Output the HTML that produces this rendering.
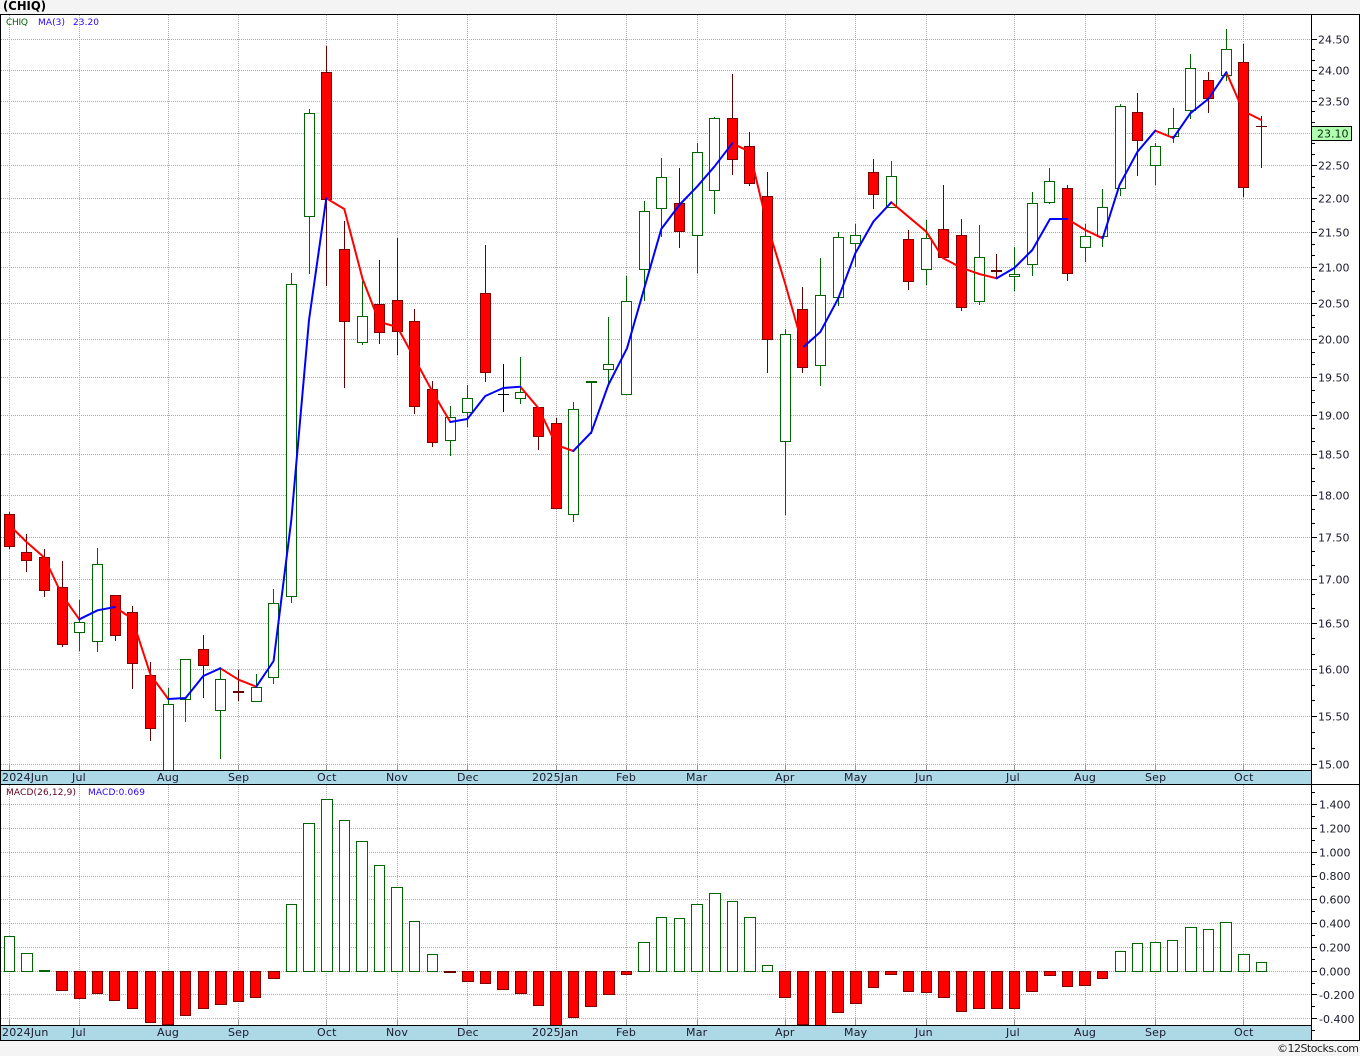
<!DOCTYPE html>
<html><head><meta charset="utf-8"><title>CHIQ</title>
<style>
html,body{margin:0;padding:0;background:#f4f4f4}
svg{display:block}
text{font-family:"DejaVu Sans","Liberation Sans",sans-serif;font-size:11px;fill:#1a1a2e}
.d text{letter-spacing:.2px}
.s{font-size:9px}
</style></head><body>
<svg xmlns="http://www.w3.org/2000/svg" width="1360" height="1056" viewBox="0 0 1360 1056">
<rect width="1360" height="1056" fill="#f4f4f4"/>
<rect x="0" y="14" width="1360" height="1026" fill="#fff"/>
<text x="3" y="10" style="font-weight:bold;font-size:12px;fill:#000" textLength="43" lengthAdjust="spacingAndGlyphs">(CHIQ)</text>

<!-- grid -->
<g fill="none" stroke="#aaa" stroke-width="1" stroke-dasharray="1 1" shape-rendering="crispEdges">
<path d="M1 39.5H1311M1 70.5H1311M1 101.5H1311M1 133.5H1311M1 165.5H1311M1 198.5H1311M1 232.5H1311M1 267.5H1311M1 303.5H1311M1 339.5H1311M1 377.5H1311M1 415.5H1311M1 454.5H1311M1 495.5H1311M1 537.5H1311M1 579.5H1311M1 623.5H1311M1 669.5H1311M1 716.5H1311M1 764.5H1311"/>
<path d="M1 804.5H1311M1 828.5H1311M1 852.5H1311M1 876.5H1311M1 899.5H1311M1 923.5H1311M1 947.5H1311M1 971.5H1311M1 994.5H1311M1 1018.5H1311"/>
<path d="M9.5 15V770M79.5 15V770M168.5 15V770M238.5 15V770M326.5 15V770M397.5 15V770M467.5 15V770M556.5 15V770M626.5 15V770M697.5 15V770M785.5 15V770M855.5 15V770M926.5 15V770M1014.5 15V770M1085.5 15V770M1155.5 15V770M1243.5 15V770"/>
<path d="M9.5 785V1025M79.5 785V1025M168.5 785V1025M238.5 785V1025M326.5 785V1025M397.5 785V1025M467.5 785V1025M556.5 785V1025M626.5 785V1025M697.5 785V1025M785.5 785V1025M855.5 785V1025M926.5 785V1025M1014.5 785V1025M1085.5 785V1025M1155.5 785V1025M1243.5 785V1025"/>
</g>
<path fill="none" stroke="#999" shape-rendering="crispEdges" d="M9.5 765V770M79.5 765V770M168.5 765V770M238.5 765V770M326.5 765V770M397.5 765V770M467.5 765V770M556.5 765V770M626.5 765V770M697.5 765V770M785.5 765V770M855.5 765V770M926.5 765V770M1014.5 765V770M1085.5 765V770M1155.5 765V770M1243.5 765V770M9.5 1020V1025M79.5 1020V1025M168.5 1020V1025M238.5 1020V1025M326.5 1020V1025M397.5 1020V1025M467.5 1020V1025M556.5 1020V1025M626.5 1020V1025M697.5 1020V1025M785.5 1020V1025M855.5 1020V1025M926.5 1020V1025M1014.5 1020V1025M1085.5 1020V1025M1155.5 1020V1025M1243.5 1020V1025"/>

<!-- candles -->
<g fill="none" stroke-width="1" shape-rendering="crispEdges">
<path stroke="#006400" d="M79.5 600V651M97.5 548V652M168.5 688V770M185.5 659V722M220.5 668V759M256.5 674V702M273.5 589V684M291.5 273V603M309.5 109V274M362.5 281V345M450.5 406V456M467.5 385V427M520.5 357V404M573.5 402V522M591.5 382V434M608.5 317V386M626.5 276V395M644.5 201V301M661.5 158V237M697.5 143V273M714.5 117V214M785.5 329V515M820.5 258V386M838.5 232V306M855.5 224V267M891.5 161V208M926.5 220V285M979.5 225V305M1014.5 247V291M1032.5 192V276M1049.5 168V204M1085.5 224V262M1102.5 189V247M1120.5 104V196M1155.5 143V185M1173.5 108V143M1190.5 54V119M1226.5 29V81"/>
<path stroke="#006400" fill="#fff" d="M74.5 622.5h10v10h-10zM92.5 564.5h10v77h-10zM163.5 704.5h10v66h-10zM180.5 659.5h10v40h-10zM215.5 679.5h10v31h-10zM251.5 687.5h10v14h-10zM268.5 603.5h10v74h-10zM286.5 284.5h10v312h-10zM304.5 113.5h10v103h-10zM357.5 316.5h10v26h-10zM445.5 417.5h10v23h-10zM462.5 398.5h10v14h-10zM515.5 392.5h10v6h-10zM568.5 409.5h10v105h-10zM603.5 364.5h10v5h-10zM621.5 301.5h10v93h-10zM639.5 211.5h10v58h-10zM656.5 177.5h10v31h-10zM692.5 152.5h10v83h-10zM709.5 118.5h10v72h-10zM780.5 334.5h10v107h-10zM815.5 295.5h10v70h-10zM833.5 237.5h10v60h-10zM850.5 235.5h10v8h-10zM886.5 176.5h10v31h-10zM921.5 238.5h10v31h-10zM974.5 257.5h10v44h-10zM1009.5 274.5h10v2h-10zM1027.5 203.5h10v61h-10zM1044.5 181.5h10v21h-10zM1080.5 236.5h10v11h-10zM1097.5 207.5h10v29h-10zM1115.5 106.5h10v82h-10zM1150.5 146.5h10v19h-10zM1168.5 128.5h10v8h-10zM1185.5 68.5h10v42h-10zM1221.5 49.5h10v26h-10z"/>
<path stroke="#660000" d="M9.5 512V549M26.5 534V572M44.5 549V597M62.5 561V647M115.5 595V641M132.5 606V689M150.5 662V741M203.5 635V698M238.5 670V701M326.5 46V286M344.5 221V388M379.5 260V344M397.5 238V355M414.5 309V414M432.5 381V447M485.5 245V382M538.5 407V450M556.5 418V509M679.5 168V248M732.5 74V175M749.5 132V186M767.5 172V373M802.5 287V373M873.5 159V209M908.5 230V290M943.5 185V258M961.5 219V311M996.5 254V279M1067.5 185V281M1137.5 93V176M1208.5 72V113M1243.5 44V197M1261.5 116V168"/>
<path stroke="#800000" fill="#ff0000" d="M4.5 514.5h10v32h-10zM21.5 552.5h10v8h-10zM39.5 557.5h10v33h-10zM57.5 587.5h10v57h-10zM110.5 595.5h10v40h-10zM127.5 612.5h10v51h-10zM145.5 675.5h10v53h-10zM198.5 649.5h10v16h-10zM321.5 72.5h10v127h-10zM339.5 249.5h10v72h-10zM374.5 304.5h10v28h-10zM392.5 300.5h10v31h-10zM409.5 321.5h10v85h-10zM427.5 389.5h10v53h-10zM480.5 293.5h10v79h-10zM533.5 407.5h10v29h-10zM551.5 423.5h10v85h-10zM674.5 203.5h10v28h-10zM727.5 118.5h10v41h-10zM744.5 146.5h10v37h-10zM762.5 196.5h10v143h-10zM797.5 309.5h10v58h-10zM868.5 172.5h10v22h-10zM903.5 239.5h10v42h-10zM938.5 229.5h10v28h-10zM956.5 235.5h10v72h-10zM1062.5 188.5h10v85h-10zM1132.5 112.5h10v28h-10zM1203.5 80.5h10v18h-10zM1238.5 62.5h10v125h-10z"/>
<!-- dojis -->
<path stroke="#660000" stroke-width="2" d="M233 692H244M991 271H1002"/>
<path stroke="#006400" stroke-width="2" d="M586 382H597"/>
<path stroke="#660000" d="M1256 126.5H1267"/>
<path stroke="#000" d="M503.5 364V412M498 394.5H509"/>
</g>

<!-- MA line -->
<g fill="none" stroke-width="2" stroke-linejoin="round" stroke-linecap="round">
<g stroke="#ff0000">
<polyline points="9.3,525 26.5,542 44.3,557.5 62,595 79.3,619.3"/>
<polyline points="115,607 132.3,619 150.6,675 168.3,699"/>
<polyline points="220.3,668.3 238.6,679.7 256.3,686.7"/>
<polyline points="326.3,198.3 344.3,209 362.6,279 379.3,322 397.3,327 414.3,358 432.6,392 450.3,422"/>
<polyline points="520.3,386.7 538.3,408 556.3,445 573.3,451"/>
<polyline points="732.3,143.3 749.6,151.7 767.3,225 785.3,284 803,346.7"/>
<polyline points="891.3,202.3 926.3,231.7 943.3,258.3 961.3,267.7 979.3,274 996.7,278.3"/>
<polyline points="1067.3,219 1085.3,230 1102.7,238.3"/>
<polyline points="1155.3,130.7 1173.3,138"/>
<polyline points="1226.3,72.3 1243.3,111 1261.3,120"/>
</g>
<g stroke="#0000ff">
<polyline points="79.3,619.3 97.6,610.3 115,607"/>
<polyline points="168.3,699 185.6,698 203.3,676 220.3,668.3"/>
<polyline points="256.3,686.7 273.6,661 291.3,520 309,320 326.3,198.3"/>
<polyline points="450.3,422 467.3,419 485.3,396 503.3,388 520.3,386.7"/>
<polyline points="573.3,451 591.3,432.3 608.3,385 627,348.3 661.3,229 679.3,205 697,186.7 714.3,166.7 732.3,143.3"/>
<polyline points="804,346.5 820.3,332 838.3,298.3 855.3,253.3 873.3,221.7 891.3,202.3"/>
<polyline points="996.7,278.3 1014.3,268 1032.3,250 1050,219 1067.3,219"/>
<polyline points="1102.7,238.3 1119.5,185 1137.5,151.7 1155.3,130.7"/>
<polyline points="1173.3,138 1190.3,113.3 1208.3,99 1226.3,72.3"/>
</g>
</g>

<!-- MACD bars -->
<g fill="none" stroke-width="1" shape-rendering="crispEdges">
<path stroke="#006400" fill="#fff" d="M4.5 936.5h10V971.5h-10zM21.5 953.5h11V971.5h-11zM286.5 904.5h10V971.5h-10zM303.5 823.5h11V971.5h-11zM321.5 799.5h11V971.5h-11zM339.5 820.5h10V971.5h-10zM356.5 841.5h11V971.5h-11zM374.5 865.5h10V971.5h-10zM391.5 887.5h11V971.5h-11zM409.5 921.5h10V971.5h-10zM427.5 954.5h10V971.5h-10zM638.5 942.5h11V971.5h-11zM656.5 917.5h10V971.5h-10zM674.5 918.5h10V971.5h-10zM691.5 904.5h11V971.5h-11zM709.5 893.5h11V971.5h-11zM727.5 901.5h10V971.5h-10zM744.5 917.5h11V971.5h-11zM762.5 965.5h10V971.5h-10zM1115.5 951.5h10V971.5h-10zM1132.5 943.5h10V971.5h-10zM1150.5 942.5h10V971.5h-10zM1167.5 940.5h10V971.5h-10zM1185.5 927.5h11V971.5h-11zM1203.5 929.5h10V971.5h-10zM1220.5 922.5h11V971.5h-11zM1238.5 954.5h11V971.5h-11zM1256.5 962.5h10V971.5h-10z"/>
<path stroke="#006400" stroke-width="2" d="M39 971H50"/>
<path stroke="#800000" fill="#ff0000" d="M56.5 971.5h11v19h-11zM74.5 971.5h11v27h-11zM92.5 971.5h10v22h-10zM109.5 971.5h10v29h-10zM127.5 971.5h10v37h-10zM145.5 971.5h10v51h-10zM162.5 971.5h11v53h-11zM180.5 971.5h10v44h-10zM198.5 971.5h10v37h-10zM215.5 971.5h11v33h-11zM233.5 971.5h10v30h-10zM250.5 971.5h10v26h-10zM268.5 971.5h11v7h-11zM462.5 971.5h11v10h-11zM480.5 971.5h10v12h-10zM497.5 971.5h11v18h-11zM515.5 971.5h11v22h-11zM533.5 971.5h10v34h-10zM550.5 971.5h11v54h-11zM568.5 971.5h10v46h-10zM585.5 971.5h11v35h-11zM603.5 971.5h11v23h-11zM621.5 971.5h10v3h-10zM779.5 971.5h11v26h-11zM797.5 971.5h11v53h-11zM815.5 971.5h10v54h-10zM832.5 971.5h11v41h-11zM850.5 971.5h11v32h-11zM868.5 971.5h10v16h-10zM885.5 971.5h11v3h-11zM903.5 971.5h10v20h-10zM921.5 971.5h10v21h-10zM938.5 971.5h11v26h-11zM956.5 971.5h10v40h-10zM973.5 971.5h11v37h-11zM991.5 971.5h11v37h-11zM1009.5 971.5h10v37h-10zM1026.5 971.5h11v20h-11zM1044.5 971.5h11v4h-11zM1062.5 971.5h10v15h-10zM1079.5 971.5h11v14h-11zM1097.5 971.5h10v7h-10z"/>
<path stroke="#660000" stroke-width="2" d="M444 972H456"/>
</g>

<!-- date bands -->
<rect x="1" y="770" width="1310" height="14" fill="#add8e6"/>
<rect x="1" y="1025" width="1310" height="15" fill="#add8e6"/>

<!-- frame -->
<g stroke="#000" stroke-width="1" fill="none" shape-rendering="crispEdges">
<path d="M0 14.5H1360M0 770.5H1311M0 784.5H1360M0 1025.5H1311M0 1040.5H1360M0.5 14V1041M1311.5 14V1041M1359.5 14V1041"/>
<!-- axis ticks -->
<path d="M1311 39.5h6M1311 70.5h6M1311 101.5h6M1311 165.5h6M1311 198.5h6M1311 232.5h6M1311 267.5h6M1311 303.5h6M1311 339.5h6M1311 377.5h6M1311 415.5h6M1311 454.5h6M1311 495.5h6M1311 537.5h6M1311 579.5h6M1311 623.5h6M1311 669.5h6M1311 716.5h6M1311 764.5h6"/>
<path d="M1311 49.5h4M1311 60.5h4M1311 80.5h4M1311 90.5h4M1311 111.5h4M1311 122.5h4M1311 143.5h4M1311 154.5h4M1311 176.5h4M1311 187.5h4M1311 209.5h4M1311 221.5h4M1311 244.5h4M1311 255.5h4M1311 279.5h4M1311 291.5h4M1311 315.5h4M1311 327.5h4M1311 352.5h4M1311 364.5h4M1311 390.5h4M1311 402.5h4M1311 428.5h4M1311 441.5h4M1311 468.5h4M1311 481.5h4M1311 509.5h4M1311 523.5h4M1311 551.5h4M1311 565.5h4M1311 594.5h4M1311 608.5h4M1311 638.5h4M1311 654.5h4M1311 685.5h4M1311 700.5h4M1311 732.5h4M1311 748.5h4"/>
<path d="M1311 804.5h6M1311 828.5h6M1311 852.5h6M1311 876.5h6M1311 899.5h6M1311 923.5h6M1311 947.5h6M1311 971.5h6M1311 994.5h6M1311 1018.5h6"/>
<path d="M1311 792.5h4M1311 816.5h4M1311 840.5h4M1311 864.5h4M1311 887.5h4M1311 911.5h4M1311 935.5h4M1311 959.5h4M1311 983.5h4M1311 1006.5h4M1311 1030.5h4"/>
</g>

<!-- price box -->
<rect x="1311.5" y="126.5" width="40" height="14" fill="#b0ffb0" stroke="#000" shape-rendering="crispEdges"/>
<text x="1317" y="137.5" style="fill:#0b2a0b">23.10</text>

<!-- axis labels -->
<g>
<text x="1318" y="43.5">24.50</text>
<text x="1318" y="74.5">24.00</text>
<text x="1318" y="105.5">23.50</text>
<text x="1318" y="169.5">22.50</text>
<text x="1318" y="202.5">22.00</text>
<text x="1318" y="236.5">21.50</text>
<text x="1318" y="271.5">21.00</text>
<text x="1318" y="307.5">20.50</text>
<text x="1318" y="343.5">20.00</text>
<text x="1318" y="381.5">19.50</text>
<text x="1318" y="419.5">19.00</text>
<text x="1318" y="458.5">18.50</text>
<text x="1318" y="499.5">18.00</text>
<text x="1318" y="541.5">17.50</text>
<text x="1318" y="583.5">17.00</text>
<text x="1318" y="627.5">16.50</text>
<text x="1318" y="673.5">16.00</text>
<text x="1318" y="720.5">15.50</text>
<text x="1318" y="768.5">15.00</text>
<text x="1319" y="808.5">1.400</text>
<text x="1319" y="832.5">1.200</text>
<text x="1319" y="856.5">1.000</text>
<text x="1319" y="880">0.800</text>
<text x="1319" y="903.5">0.600</text>
<text x="1319" y="927.5">0.400</text>
<text x="1319" y="951.5">0.200</text>
<text x="1319" y="975.5">0.000</text>
<text x="1319" y="999">-0.200</text>
<text x="1319" y="1023">-0.400</text>
</g>

<!-- date labels -->
<g class="d">
<text x="2" y="781">2024Jun</text><text x="72" y="781">Jul</text><text x="157" y="781">Aug</text><text x="228" y="781">Sep</text><text x="317" y="781">Oct</text><text x="386" y="781">Nov</text><text x="457" y="781">Dec</text><text x="532" y="781">2025Jan</text><text x="616" y="781">Feb</text><text x="686" y="781">Mar</text><text x="775" y="781">Apr</text><text x="844" y="781">May</text><text x="915" y="781">Jun</text><text x="1006" y="781">Jul</text><text x="1074" y="781">Aug</text><text x="1145" y="781">Sep</text><text x="1234" y="781">Oct</text>
<text x="2" y="1036">2024Jun</text><text x="72" y="1036">Jul</text><text x="157" y="1036">Aug</text><text x="228" y="1036">Sep</text><text x="317" y="1036">Oct</text><text x="386" y="1036">Nov</text><text x="457" y="1036">Dec</text><text x="532" y="1036">2025Jan</text><text x="616" y="1036">Feb</text><text x="686" y="1036">Mar</text><text x="775" y="1036">Apr</text><text x="844" y="1036">May</text><text x="915" y="1036">Jun</text><text x="1006" y="1036">Jul</text><text x="1074" y="1036">Aug</text><text x="1145" y="1036">Sep</text><text x="1234" y="1036">Oct</text>
</g>

<!-- legends -->
<text class="s" x="6" y="25" textLength="22" style="fill:#006400">CHIQ</text>
<text class="s" x="38" y="25" textLength="27" style="fill:#2a00ff">MA(3)</text>
<text class="s" x="73" y="25" textLength="26" style="fill:#2a00ff">23.20</text>
<text class="s" x="6" y="795" textLength="70" style="fill:#600020">MACD(26,12,9)</text>
<text class="s" x="88" y="795" textLength="57" style="fill:#2a00ff">MACD:0.069</text>

<text x="1277" y="1052" textLength="82" style="fill:#222">©12Stocks.com</text>
</svg>
</body></html>
